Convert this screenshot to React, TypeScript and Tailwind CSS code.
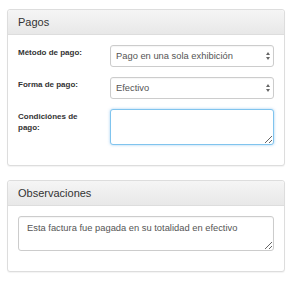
import type { ReactNode } from "react";

const Arrows = () => (
  <svg
    width="4"
    height="8"
    viewBox="0 0 4 8"
    className="pointer-events-none absolute right-[4px] top-1/2 -translate-y-1/2"
  >
    <path d="M2 0 L4 3 H0 Z M2 8 L0 5 H4 Z" fill="#666" />
  </svg>
);

function Panel({ title, children }: { title: string; children: ReactNode }) {
  return (
    <div className="mb-[14px] w-[278px] rounded-[3px] border border-[#dddddd] bg-white shadow-[0_1px_1px_rgba(0,0,0,0.05)]">
      <div className="flex h-[25px] items-center rounded-t-[3px] border-b border-[#dddddd] bg-linear-to-b from-[#f5f5f5] to-[#e8e8e8] px-[10px] text-[11px] text-[#333]">
        {title}
      </div>
      <div className="px-[10px] pt-[10px] pb-[10px]">{children}</div>
    </div>
  );
}

function Row({ label, children }: { label: string; children: ReactNode }) {
  return (
    <div className="mb-[10px] flex">
      <label className="w-[92px] shrink-0 pr-[12px] pt-[2px] text-[8px] font-bold leading-[11px] text-[#333]">
        {label}
      </label>
      <div className="relative flex-1">{children}</div>
    </div>
  );
}

export default function App() {
  const selectCls =
    "block h-[22px] w-full appearance-none rounded-[3px] border border-[#cccccc] bg-white pl-[5px] text-[9.35px] text-[#555] shadow-[inset_0_1px_1px_rgba(0,0,0,0.04)] outline-none";

  return (
    <div className="min-h-[285px] bg-white pt-[9px] pl-[7px] font-['Liberation_Sans',Arial,sans-serif]">
      <Panel title="Pagos">
        <Row label="Método de pago:">
          <select className={selectCls} defaultValue="unica">
            <option value="unica">Pago en una sola exhibición</option>
            <option value="parcial">Pago en parcialidades</option>
          </select>
          <Arrows />
        </Row>
        <Row label="Forma de pago:">
          <select className={selectCls} defaultValue="efectivo">
            <option value="efectivo">Efectivo</option>
            <option value="cheque">Cheque</option>
            <option value="transferencia">Transferencia</option>
          </select>
          <Arrows />
        </Row>
        <Row label="Condiciónes de pago:">
          <textarea className="block h-[36px] w-full rounded-[3px] border border-[#80c4ee] bg-white px-[8px] py-[5px] text-[9.35px] text-[#555] shadow-[0_0_3px_rgba(102,175,233,0.6)] outline-none" />
        </Row>
      </Panel>

      <Panel title="Observaciones">
        <textarea
          className="mb-[10px] block h-[35px] w-full rounded-[3px] border border-[#cccccc] bg-white px-[8px] pt-[5px] text-[9.35px] leading-[13px] text-[#555] shadow-[inset_0_1px_1px_rgba(0,0,0,0.04)] outline-none"
          defaultValue="Esta factura fue pagada en su totalidad en efectivo"
        />
      </Panel>
    </div>
  );
}
